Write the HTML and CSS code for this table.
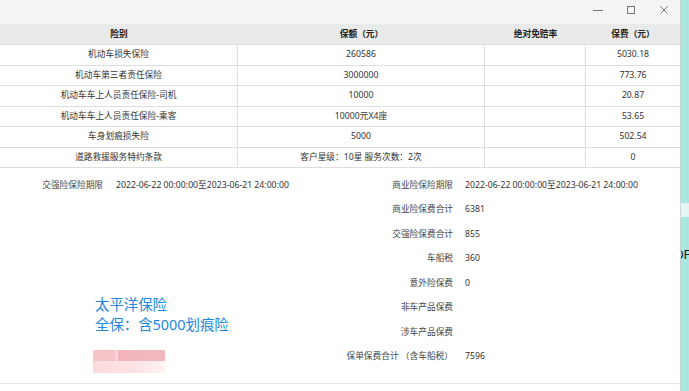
FILE: index.html
```html
<!DOCTYPE html>
<html lang="zh-CN">
<head>
<meta charset="utf-8">
<title>保单</title>
<link rel="stylesheet" href="styles.css">
</head>
<body>
<div class="screen">
  <div class="window">
    <div class="titlebar">
      <span class="ctl"><svg width="10" height="10" viewBox="0 0 10 10"><path d="M0 5.5H10" stroke="#777" stroke-width="1"/></svg></span>
      <span class="ctl"><svg width="10" height="10" viewBox="0 0 10 10"><rect x="1.5" y="1.5" width="7" height="7" fill="none" stroke="#777" stroke-width="1"/></svg></span>
      <span class="ctl"><svg width="10" height="10" viewBox="0 0 10 10"><path d="M1.5 1.5L8.5 8.5M8.5 1.5L1.5 8.5" stroke="#777" stroke-width="1"/></svg></span>
    </div>
    <div class="thead">
      <div class="th">险别</div>
      <div class="th">保额（元）</div>
      <div class="th">绝对免赔率</div>
      <div class="th">保费（元）</div>
    </div>
    <div class="trow"><div class="td">机动车损失保险</div><div class="td">260586</div><div class="td"></div><div class="td">5030.18</div></div>
    <div class="trow"><div class="td">机动车第三者责任保险</div><div class="td">3000000</div><div class="td"></div><div class="td">773.76</div></div>
    <div class="trow"><div class="td">机动车车上人员责任保险-司机</div><div class="td">10000</div><div class="td"></div><div class="td">20.87</div></div>
    <div class="trow"><div class="td">机动车车上人员责任保险-乘客</div><div class="td">10000元X4座</div><div class="td"></div><div class="td">53.65</div></div>
    <div class="trow"><div class="td">车身划痕损失险</div><div class="td">5000</div><div class="td"></div><div class="td">502.54</div></div>
    <div class="trow"><div class="td">道路救援服务特约条款</div><div class="td">客户星级：10星 服务次数：2次</div><div class="td"></div><div class="td">0</div></div>
    <div class="form">
      <div class="form-left">
        <div class="frow"><span class="lbl">交强险保险期限</span><span class="val">2022-06-22 00:00:00至2023-06-21 24:00:00</span></div>
        <div class="note">
          <div>太平洋保险</div>
          <div>全保<span class="colon">：</span>含5000划痕险</div>
        </div>
        <div class="blur"><div class="blur-top"></div><div class="blur-bottom"></div></div>
      </div>
      <div class="form-right">
        <div class="frow"><span class="lbl">商业险保险期限</span><span class="val">2022-06-22 00:00:00至2023-06-21 24:00:00</span></div>
        <div class="frow"><span class="lbl">商业险保费合计</span><span class="val">6381</span></div>
        <div class="frow"><span class="lbl">交强险保费合计</span><span class="val">855</span></div>
        <div class="frow"><span class="lbl">车船税</span><span class="val">360</span></div>
        <div class="frow"><span class="lbl">意外险保费</span><span class="val">0</span></div>
        <div class="frow"><span class="lbl">非车产品保费</span><span class="val"></span></div>
        <div class="frow"><span class="lbl">涉车产品保费</span><span class="val"></span></div>
        <div class="frow"><span class="lbl">保单保费合计 （含车船税）</span><span class="val">7596</span></div>
      </div>
    </div>
    <div class="footer"></div>
  </div>
  <div class="strip">
    <div class="strip-light"></div>
    <div class="strip-text">DF</div>
  </div>
</div>
</body>
</html>
```

FILE: styles.css
```css
* { box-sizing: border-box; }
html, body { margin: 0; padding: 0; }
body {
  width: 689px;
  height: 391px;
  overflow: hidden;
  background: #fff;
  font-family: "Noto Sans", "Noto Sans CJK SC", sans-serif;
  font-size: 8.7px;
  color: #333;
}
.screen { display: flex; height: 391px; }
.window {
  width: 681px;
  height: 391px;
  border-right: 1px solid #cdd5d4;
  display: flex;
  flex-direction: column;
  background: #fff;
}
.titlebar {
  height: 24px;
  flex: none;
  background: #f5f5f5;
  display: flex;
  justify-content: flex-end;
}
.ctl {
  width: 33px;
  height: 19px;
  display: flex;
  align-items: center;
  justify-content: center;
}
.ctl svg { display: block; }
.thead, .trow {
  display: grid;
  grid-template-columns: 238px 247px 101px 94px;
  flex: none;
}
.thead {
  height: 21px;
  background: #e9ebeb;
  border-bottom: 1px solid #dcdedf;
  font-weight: bold;
  color: #222;
}
.th { display: flex; align-items: center; justify-content: center; line-height: 1; }
.trow { height: 20.5px; border-bottom: 1px solid #dedede; }
.td {
  display: flex;
  align-items: center;
  justify-content: center;
  line-height: 1;
  border-right: 1px solid #dedede;
  white-space: nowrap;
}
.td:last-child { border-right: none; }
.form { display: flex; padding-top: 5px; flex: none; }
.form-left { width: 340px; display: flex; flex-direction: column; }
.form-right { flex: 1; display: flex; flex-direction: column; }
.frow { display: flex; align-items: center; height: 24.5px; line-height: 1; }
.lbl { width: 103px; flex: none; text-align: right; color: #444; white-space: nowrap; }
.val { padding-left: 13px; white-space: nowrap; color: #333; }
.form-right .lbl { width: 113px; }
.form-right .val { padding-left: 12px; }
.note {
  margin-top: 97px;
  padding-left: 95px;
  color: #2188df;
  font-size: 14.4px;
  line-height: 19px;
}
.colon { font-family: "Noto Sans CJK JP", "Noto Sans CJK SC", sans-serif; }
.blur {
  margin: 16.5px 0 0 93px;
  width: 72px;
  height: 23px;
  display: flex;
  flex-direction: column;
}
.blur-top {
  height: 11px;
  background: linear-gradient(to right, #f5c4c9 0, #f5c4c9 30%, #f8d3d6 30%, #f8d3d6 35%, #f2b4bb 35%, #f3b8bf 100%);
}
.blur-bottom {
  flex: 1;
  background: linear-gradient(to right, #fcdadd 0, #fde3e5 60%, #fff2f3 100%);
}
.footer {
  margin-top: auto;
  height: 8px;
  border-top: 1px solid #e6e6e6;
}
.strip {
  width: 8px;
  flex: none;
  background: #a9e7e0;
  overflow: hidden;
  display: flex;
  flex-direction: column;
}
.strip-light { margin-top: 203px; height: 14px; background: #e2f5f2; flex: none; }
.strip-text {
  margin-top: 31px;
  margin-left: -6px;
  font-family: "Liberation Sans", sans-serif;
  font-size: 12px;
  line-height: 14px;
  color: #111;
  white-space: nowrap;
}
```
